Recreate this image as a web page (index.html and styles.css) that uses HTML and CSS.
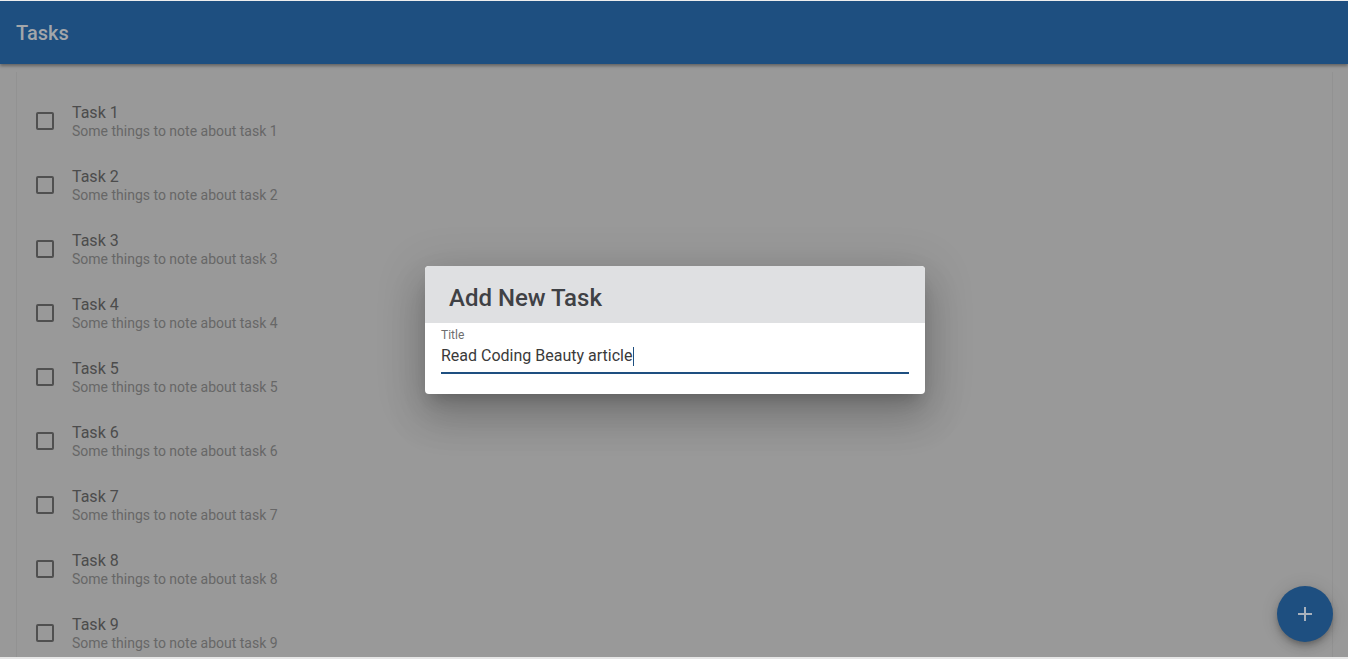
FILE: index.html
```html
<!DOCTYPE html>
<html>
<head>
<meta charset="utf-8">
<link rel="stylesheet" href="styles.css">
</head>
<body>
<header class="appbar"><span class="appbar-title">Tasks</span></header>
<main class="content">
  <ul class="list">
    <li class="item"><span class="box"></span><div class="text"><div class="primary">Task 1</div><div class="secondary">Some things to note about task 1</div></div></li>
    <li class="item"><span class="box"></span><div class="text"><div class="primary">Task 2</div><div class="secondary">Some things to note about task 2</div></div></li>
    <li class="item"><span class="box"></span><div class="text"><div class="primary">Task 3</div><div class="secondary">Some things to note about task 3</div></div></li>
    <li class="item"><span class="box"></span><div class="text"><div class="primary">Task 4</div><div class="secondary">Some things to note about task 4</div></div></li>
    <li class="item"><span class="box"></span><div class="text"><div class="primary">Task 5</div><div class="secondary">Some things to note about task 5</div></div></li>
    <li class="item"><span class="box"></span><div class="text"><div class="primary">Task 6</div><div class="secondary">Some things to note about task 6</div></div></li>
    <li class="item"><span class="box"></span><div class="text"><div class="primary">Task 7</div><div class="secondary">Some things to note about task 7</div></div></li>
    <li class="item"><span class="box"></span><div class="text"><div class="primary">Task 8</div><div class="secondary">Some things to note about task 8</div></div></li>
    <li class="item"><span class="box"></span><div class="text"><div class="primary">Task 9</div><div class="secondary">Some things to note about task 9</div></div></li>
  </ul>
</main>
<div class="overlay">
  <div class="dialog">
    <div class="dialog-head">Add New Task</div>
    <div class="dialog-body">
      <div class="label">Title</div>
      <div class="input">Read Coding Beauty article<span class="caret"></span></div>
    </div>
  </div>
</div>
<button class="fab" aria-label="Add">
  <svg width="16" height="16" viewBox="0 0 16 16"><path d="M8 1v14M1 8h14" stroke="#a9b2bd" stroke-width="2"/></svg>
</button>
</body>
</html>
```
FILE: styles.css
```css
html, body {
  margin: 0;
  padding: 0;
  height: 100%;
  overflow: hidden;
}
body {
  background: #999999;
  font-family: Roboto, "Liberation Sans", sans-serif;
  position: relative;
  border-bottom: 2px solid #e6e6e6;
  box-sizing: border-box;
}
.appbar {
  height: 64px;
  background: #1e4f80;
  display: flex;
  align-items: center;
  padding: 0 16px;
  border-top: 1px solid #eeeeee;
  box-sizing: border-box;
  box-shadow: 0 2px 3px rgba(0,0,0,0.35);
  position: relative;
  z-index: 1;
}
.appbar-title {
  color: #a3a6aa;
  font-size: 20px;
  font-weight: 500;
}
.content {
  padding: 8px 15px 0 16px;
}
.list {
  list-style: none;
  margin: 0;
  padding: 17px 0 0;
  border-left: 1px solid #929292;
  border-right: 1px solid #929292;
  height: 600px;
}
.item {
  height: 64px;
  display: flex;
  align-items: center;
  padding: 0 18px 0 19px;
  box-sizing: border-box;
}
.box {
  width: 14px;
  height: 14px;
  border: 2px solid #505050;
  border-radius: 2px;
  flex: none;
  margin-right: 18px;
}
.primary {
  color: #4c4c4c;
  font-size: 16px;
  line-height: 19px;
}
.secondary {
  color: #676767;
  font-size: 14px;
  line-height: 18px;
}
.overlay {
  position: absolute;
  left: 0;
  right: 0;
  top: 0;
  height: 659px;
  display: flex;
  justify-content: center;
  align-items: flex-start;
  z-index: 2;
}
.dialog {
  margin-top: 266px;
  margin-left: 2px;
  width: 500px;
  background: #ffffff;
  border-radius: 4px;
  overflow: hidden;
  box-shadow: 0 11px 15px -7px rgba(0,0,0,0.2), 0 24px 38px 3px rgba(0,0,0,0.14), 0 9px 46px 8px rgba(0,0,0,0.12);
}
.dialog-head {
  background: #dfe0e2;
  height: 57px;
  box-sizing: border-box;
  padding: 18px 24px 0;
  font-size: 24px;
  font-weight: 500;
  color: #3f4145;
  line-height: 28px;
}
.dialog-body {
  padding: 5px 16px 20px;
}
.label {
  font-size: 12px;
  color: #6e6e6e;
  line-height: 14px;
}
.input {
  font-size: 16px;
  color: #3a3a3a;
  line-height: 20px;
  padding: 4px 0 6px;
  border-bottom: 2px solid #1e4f80;
  display: flex;
  align-items: center;
}
.caret {
  display: inline-block;
  width: 1px;
  height: 19px;
  background: #1e4f80;
  margin-left: 1px;
}
.fab {
  position: absolute;
  right: 15px;
  top: 586px;
  width: 56px;
  height: 56px;
  border-radius: 50%;
  border: none;
  background: #1e4f80;
  display: flex;
  align-items: center;
  justify-content: center;
  box-shadow: 0 3px 5px -1px rgba(0,0,0,0.2), 0 6px 10px 0 rgba(0,0,0,0.14), 0 1px 18px 0 rgba(0,0,0,0.12);
  padding: 0;
  z-index: 3;
}
```
